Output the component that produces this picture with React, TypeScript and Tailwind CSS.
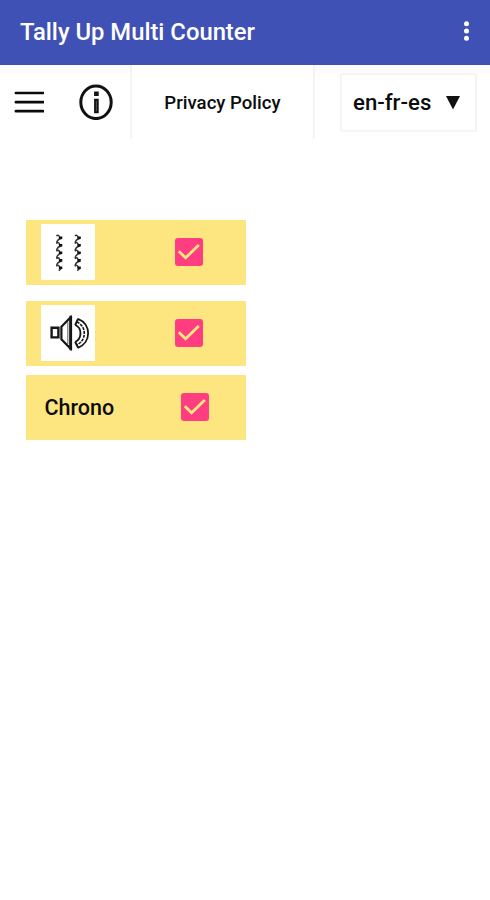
import { useState } from 'react';
import type { ReactNode } from 'react';

function MenuIcon() {
  return (
    <svg className="h-6 w-[30px]" viewBox="0 0 30 24" fill="none" stroke="#0b0b0b" strokeWidth="2.7" strokeLinecap="round">
      <path d="M1.9 3h27.2M1.9 12.2h27.2M1.9 21.2h27.2" />
    </svg>
  );
}

function InfoIcon() {
  return (
    <svg className="h-9 w-[34px]" viewBox="0 0 34 36" fill="none" stroke="#111111">
      <ellipse cx="17" cy="18.3" rx="15.2" ry="16.3" strokeWidth="3" />
      <path d="M17.4 7.4v4.6M17.4 14.8v14.4" strokeWidth="4.6" />
      <path d="M17.4 16.8v10.4" stroke="#555555" strokeWidth="1" />
    </svg>
  );
}

function VibrateIcon() {
  const wave = 'M1 2Q3 0 4.5 3.5M1 9.6Q3 7 4.5 10.8M1 17.2Q3 14.6 4.5 18.4M1 24.8Q3 22.2 4.5 26M1 32.4Q3 29.8 4.5 33.6';
  const returns = 'M6 4.5Q2 5 1.2 8.8M6 12Q2 12.5 1.2 16.4M6 19.6Q2 20.1 1.2 24M6 27.2Q2 27.7 1.2 31.6M6 34.2L3.4 36.6';
  const knots = 'M3.5 3.8h3.4M3.5 11.2h3.4M3.5 18.8h3.4M3.5 26.4h3.4M3.5 33.8h3.4';
  return (
    <svg className="h-14 w-[54px]" viewBox="0 0 54 56" fill="none" stroke="#333333" strokeWidth="1.5">
      <g transform="translate(14.4 10)">
        <path d={wave} />
        <path d={returns} />
        <path d={knots} stroke="#111111" strokeWidth="2.6" />
      </g>
      <g transform="translate(32.9 10)">
        <path d={wave} />
        <path d={returns} />
        <path d={knots} stroke="#111111" strokeWidth="2.6" />
      </g>
    </svg>
  );
}

function SpeakerIcon() {
  return (
    <svg className="h-14 w-[54px]" viewBox="0 0 54 56" fill="none" stroke="#161616">
      <path d="M10.6 22.8h6.8v9.6h-6.8z" strokeWidth="2.4" />
      <path d="M20.4 21.8L29.4 12.5v31l-9-9.3z" strokeWidth="2.2" />
      <path d="M26.8 17v22" stroke="#777777" strokeWidth="1.2" />
      <path d="M29.8 10.8v34.4" strokeWidth="2.6" />
      <path d="M37 13.8C50.5 19 50.5 37.5 37 42.8" strokeWidth="1.8" />
      <path d="M35.8 17C45.8 20.8 45.8 35.8 35.8 39.8" strokeWidth="1.6" strokeDasharray="3 1" />
      <path d="M34.3 20C41.2 23 41.2 33.5 34.3 37" strokeWidth="1.9" />
      <path d="M37.2 13.8l-3.1 6.4M37.2 42.7l-3.1-5.9" strokeWidth="2" />
    </svg>
  );
}

function Checkbox({ label }: { label: string }) {
  const [checked, setChecked] = useState(true);

  return (
    <button
      type="button"
      role="checkbox"
      aria-label={label}
      aria-checked={checked}
      onClick={() => setChecked(!checked)}
      className="h-7 w-7 shrink-0 rounded-[3px] bg-[#ff3d80]"
    >
      {checked && (
        <svg viewBox="0 0 28 28" fill="none" stroke="#fee680" strokeWidth="2.8">
          <path d="M3.8 13.2l6.8 6.6L23.8 7" />
        </svg>
      )}
    </button>
  );
}

function IconTile({ children }: { children: ReactNode }) {
  return <div className="h-14 w-[54px] shrink-0 bg-white">{children}</div>;
}

export default function App() {
  return (
    <div className="min-h-[900px] w-full bg-white font-['Roboto',sans-serif] font-medium text-[#0c0c0c]">
      <header className="flex h-[65px] items-center justify-between border-b border-[#4350aa] bg-[#3f51b5] pr-[21px] pl-5">
        <h1 className="pt-0.5 text-[23.8px] font-medium whitespace-nowrap text-white">Tally Up Multi Counter</h1>
        <svg className="-mt-0.5 h-5 w-[5px]" viewBox="0 0 5 20" fill="#ffffff">
          <circle cx="2.5" cy="2.8" r="2.5" />
          <circle cx="2.5" cy="10" r="2.5" />
          <circle cx="2.5" cy="17.2" r="2.5" />
        </svg>
      </header>

      {/* Toolbar */}
      <div className="flex h-[74px] items-center bg-linear-to-b from-[#fafafa] to-white to-20% pl-[14px]">
        <MenuIcon />
        <div className="ml-[35px]">
          <InfoIcon />
        </div>
        <button
          type="button"
          className="ml-[17px] h-[74px] w-[185px] rounded-b-[3px] border-x-2 border-[#f4f4f6] bg-white pt-[3px] text-[18.6px] whitespace-nowrap"
        >
          Privacy Policy
        </button>
        <button
          type="button"
          className="ml-[25px] flex h-[59px] w-[137px] items-center justify-between rounded-[3px] border-2 border-[#f4f4f6] bg-white pt-px pr-[15px] pl-[11px] text-[22.2px] whitespace-nowrap"
        >
          en-fr-es
          <svg className="mt-px h-[14px] w-[14px]" viewBox="0 0 14 14" fill="#111111">
            <path d="M0 0h14L7 13.5z" />
          </svg>
        </button>
      </div>

      {/* Settings */}
      <main className="flex w-[246px] flex-col pt-[81px] pl-[26px]">
        <div className="flex h-[65px] items-center justify-between bg-[#fde67f] pr-[43px] pb-px pl-[15px]">
          <IconTile>
            <VibrateIcon />
          </IconTile>
          <Checkbox label="Vibration" />
        </div>
        <div className="mt-4 flex h-[65px] items-center justify-between bg-[#fde67f] pr-[43px] pb-px pl-[15px]">
          <IconTile>
            <SpeakerIcon />
          </IconTile>
          <Checkbox label="Sound" />
        </div>
        <div className="mt-[9px] flex h-[65px] items-center justify-between bg-[#fde67f] pr-[37px] pb-px pl-[18.5px]">
          <span className="pt-[3px] text-[21.5px]">Chrono</span>
          <Checkbox label="Chrono" />
        </div>
      </main>
    </div>
  );
}
